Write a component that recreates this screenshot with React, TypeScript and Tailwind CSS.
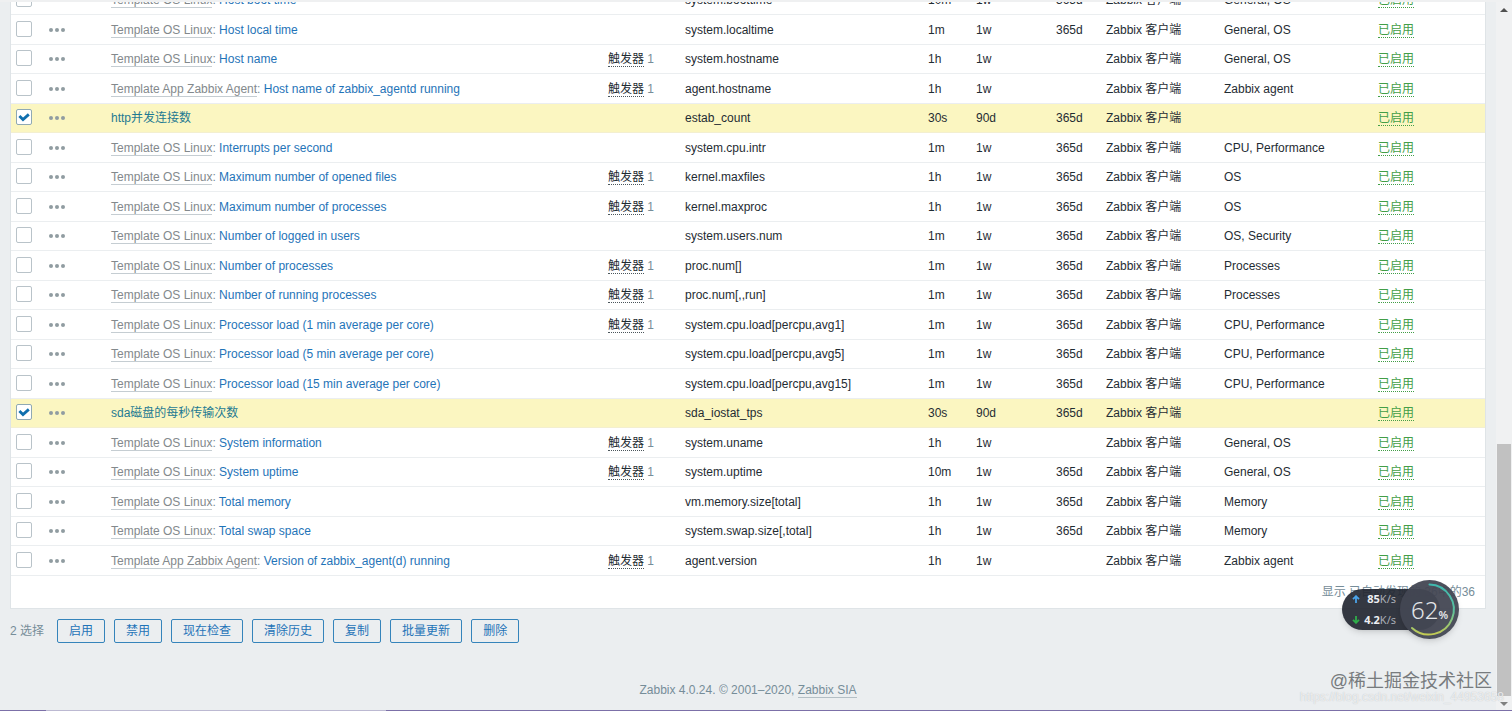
import React, { useState } from 'react';

type Item = {
  template?: string;
  name: string;
  trigger?: boolean;
  itemKey: string;
  interval: string;
  history: string;
  trends?: string;
  apps?: string;
};

const LINUX = 'Template OS Linux';
const AGENT = 'Template App Zabbix Agent';

const items: Item[] = [
  { template: LINUX, name: 'Host boot time', itemKey: 'system.boottime', interval: '10m', history: '1w', trends: '365d', apps: 'General, OS' },
  { template: LINUX, name: 'Host local time', itemKey: 'system.localtime', interval: '1m', history: '1w', trends: '365d', apps: 'General, OS' },
  { template: LINUX, name: 'Host name', trigger: true, itemKey: 'system.hostname', interval: '1h', history: '1w', apps: 'General, OS' },
  { template: AGENT, name: 'Host name of zabbix_agentd running', trigger: true, itemKey: 'agent.hostname', interval: '1h', history: '1w', apps: 'Zabbix agent' },
  { name: 'http并发连接数', itemKey: 'estab_count', interval: '30s', history: '90d', trends: '365d' },
  { template: LINUX, name: 'Interrupts per second', itemKey: 'system.cpu.intr', interval: '1m', history: '1w', trends: '365d', apps: 'CPU, Performance' },
  { template: LINUX, name: 'Maximum number of opened files', trigger: true, itemKey: 'kernel.maxfiles', interval: '1h', history: '1w', trends: '365d', apps: 'OS' },
  { template: LINUX, name: 'Maximum number of processes', trigger: true, itemKey: 'kernel.maxproc', interval: '1h', history: '1w', trends: '365d', apps: 'OS' },
  { template: LINUX, name: 'Number of logged in users', itemKey: 'system.users.num', interval: '1m', history: '1w', trends: '365d', apps: 'OS, Security' },
  { template: LINUX, name: 'Number of processes', trigger: true, itemKey: 'proc.num[]', interval: '1m', history: '1w', trends: '365d', apps: 'Processes' },
  { template: LINUX, name: 'Number of running processes', trigger: true, itemKey: 'proc.num[,,run]', interval: '1m', history: '1w', trends: '365d', apps: 'Processes' },
  { template: LINUX, name: 'Processor load (1 min average per core)', trigger: true, itemKey: 'system.cpu.load[percpu,avg1]', interval: '1m', history: '1w', trends: '365d', apps: 'CPU, Performance' },
  { template: LINUX, name: 'Processor load (5 min average per core)', itemKey: 'system.cpu.load[percpu,avg5]', interval: '1m', history: '1w', trends: '365d', apps: 'CPU, Performance' },
  { template: LINUX, name: 'Processor load (15 min average per core)', itemKey: 'system.cpu.load[percpu,avg15]', interval: '1m', history: '1w', trends: '365d', apps: 'CPU, Performance' },
  { name: 'sda磁盘的每秒传输次数', itemKey: 'sda_iostat_tps', interval: '30s', history: '90d', trends: '365d' },
  { template: LINUX, name: 'System information', trigger: true, itemKey: 'system.uname', interval: '1h', history: '1w', apps: 'General, OS' },
  { template: LINUX, name: 'System uptime', trigger: true, itemKey: 'system.uptime', interval: '10m', history: '1w', trends: '365d', apps: 'General, OS' },
  { template: LINUX, name: 'Total memory', itemKey: 'vm.memory.size[total]', interval: '1h', history: '1w', trends: '365d', apps: 'Memory' },
  { template: LINUX, name: 'Total swap space', itemKey: 'system.swap.size[,total]', interval: '1h', history: '1w', trends: '365d', apps: 'Memory' },
  { template: AGENT, name: 'Version of zabbix_agent(d) running', trigger: true, itemKey: 'agent.version', interval: '1h', history: '1w', apps: 'Zabbix agent' },
];

const actions = ['启用', '禁用', '现在检查', '清除历史', '复制', '批量更新', '删除'];

const ItemRow = ({ item, checked, onToggle }: { item: Item, checked: boolean, onToggle: () => void }) => (
  <tr className={`h-[29px] even:h-[30px] border-b ${checked ? 'bg-[#fbf6c1] border-[#f3efd0]' : 'bg-white border-[#ebeef0]'}`}>
    <td className="pb-0.5 pl-[5px]">
      <span className="relative block size-4">
        <input
          type="checkbox"
          aria-label={item.name}
          checked={checked}
          onChange={onToggle}
          className="block size-4 appearance-none rounded-xs border border-[#b9c3c9] bg-white checked:border-[#8fa9b4] focus:border-[#0275b8] focus:outline-none"
        />
        {checked && (
          <svg viewBox="0 0 16 16" className="pointer-events-none absolute inset-0 size-4" fill="none" stroke="#0f6fae" strokeWidth="2.8">
            <path d="M3.4 7 7 10.6l5.8-5.2" />
          </svg>
        )}
      </span>
    </td>
    <td className="pl-[5px]">
      <button aria-label="菜单" className="block">
        <svg viewBox="0 0 16 4" className="h-1 w-4" fill="#909ca1">
          <circle cx="2" cy="2" r="2" />
          <circle cx="8" cy="2" r="2" />
          <circle cx="14" cy="2" r="2" />
        </svg>
      </button>
    </td>
    <td className="px-[5px] text-[#768d99]">
      {item.template && (
        <>
          <a href="#" className="border-b border-[#c5cdd2] text-[#83898c]">{item.template}</a>
          {': '}
        </>
      )}
      <a href="#" className={checked ? 'text-[#1f7a92]' : 'text-[#1f74b8]'}>{item.name}</a>
    </td>
    <td className="px-[5px] text-[#768d99]">
      {item.trigger && (
        <>
          <a href="#" className="border-b border-dotted border-[#4b565b] text-[#1f2c33]">触发器</a>
          {' '}1
        </>
      )}
    </td>
    <td className="px-[5px]">{item.itemKey}</td>
    <td className="px-[5px]">{item.interval}</td>
    <td className="px-[5px]">{item.history}</td>
    <td className="px-[5px]">{item.trends}</td>
    <td className="px-[5px]">Zabbix 客户端</td>
    <td className="px-[5px]">{item.apps}</td>
    <td className="px-[5px]">
      <a href="#" className="border-b border-dotted border-[#429e47] text-[#429e47]">已启用</a>
    </td>
  </tr>
);

const ScrollBar = () => (
  <div className="flex w-4 shrink-0 flex-col items-center bg-[#f0f1f2] pt-1.5 pb-1">
    <svg viewBox="0 0 8 4" className="h-1 w-2" fill="#505050"><path d="M0 4 4 0l4 4z" /></svg>
    <div className="flex w-full flex-1 flex-col justify-end px-px pb-1.5">
      <div className="h-[252px] bg-[#c1c1c1]" />
    </div>
    <svg viewBox="0 0 8 4" className="h-1 w-2" fill="#808080"><path d="M0 0h8L4 4z" /></svg>
  </div>
);

const NetMonitor = () => (
  <div className="absolute right-[53px] bottom-[72px] flex items-center font-['Noto_Sans',sans-serif]">
    <div className="-mr-10 flex h-[41px] w-[98px] flex-col justify-between rounded-full bg-[#232732]/92 py-1 pl-[10px] text-[11px] leading-3 text-[#a9adb5] shadow-md">
      <div className="flex items-center">
        <svg viewBox="0 0 8 8" className="size-2" fill="none" stroke="#4ba3e8" strokeWidth="1.8"><path d="M4 8V1.200M1 4.200l3-3 3 3" /></svg>
        <span className="flex-1 pr-11 text-right"><b className="text-[#eceef2]">85</b>K/s</span>
      </div>
      <div className="flex items-center">
        <svg viewBox="0 0 8 8" className="size-2" fill="none" stroke="#2fae4a" strokeWidth="1.8"><path d="M4 0v6.800M1 3.800l3 3 3-3" /></svg>
        <span className="flex-1 pr-11 text-right"><b className="text-[#eceef2]">4.2</b>K/s</span>
      </div>
    </div>
    <div className="relative flex size-[59px] items-center justify-center rounded-full bg-[#434753]/95 shadow-md">
      <svg viewBox="0 0 59 59" className="absolute inset-0" fill="none" strokeWidth="2" strokeLinecap="round">
        <defs>
          <linearGradient id="ring" x1="0" y1="0" x2="0" y2="1">
            <stop offset="0" stopColor="#3fb8ae" />
            <stop offset="0.5" stopColor="#58c0a0" />
            <stop offset="1" stopColor="#c3cb54" />
          </linearGradient>
        </defs>
        <path d="M29.500 4.500A25 25 0 1 1 12 48" stroke="url(#ring)" />
      </svg>
      <span className="relative flex items-baseline text-[#e4e6ea]">
        <span className="text-2xl font-light">62</span>
        <span className="text-[11px] font-semibold">%</span>
      </span>
    </div>
  </div>
);

export default function App() {
  const [selected, setSelected] = useState<string[]>(['estab_count', 'sda_iostat_tps']);

  const toggle = (key: string) => {
    setSelected(prev => prev.includes(key) ? prev.filter(k => k !== key) : [...prev, key]);
  };

  return (
    <div className="relative flex h-screen flex-col overflow-hidden bg-[#ebeef0] font-['Liberation_Sans','Noto_Sans_CJK_SC',sans-serif] text-xs text-[#1f2c33]">
      <div className="h-0.5 shrink-0 bg-[#eff0f1]" />
      <div className="flex min-h-0 flex-1">
        {/* content stays scrolled to the end of the list */}
        <div className="flex min-w-0 flex-1 flex-col justify-end overflow-hidden px-[10px]">
          <div className="shrink-0 border border-[#dfe4e7] bg-white">
            <table className="w-full table-fixed border-collapse">
              <colgroup>
                <col className="w-[33px]" />
                <col className="w-[62px]" />
                <col />
                <col className="w-[77px]" />
                <col className="w-[243px]" />
                <col className="w-[48px]" />
                <col className="w-[80px]" />
                <col className="w-[50px]" />
                <col className="w-[118px]" />
                <col className="w-[154px]" />
                <col className="w-[112px]" />
              </colgroup>
              <tbody>
                {items.map(item => (
                  <ItemRow
                    key={item.itemKey}
                    item={item}
                    checked={selected.includes(item.itemKey)}
                    onToggle={() => toggle(item.itemKey)}
                  />
                ))}
              </tbody>
            </table>
            <div className="flex h-8 items-center justify-end px-[10px] text-[#768d99]">显示 已自动发现的 36中的36</div>
          </div>

          <div className="mt-[10px] flex shrink-0 items-center gap-[9px] text-[#768d99]">
            <span className="mr-1">{selected.length} 选择</span>
            {actions.map(label => (
              <button key={label} className="h-6 rounded-xs border border-[#3584bb] px-[11px] text-[#1f74b8]">{label}</button>
            ))}
          </div>

          <footer className="shrink-0 pt-[39px] pb-3 text-center leading-4 text-[#768d99]">
            Zabbix 4.0.24. © 2001–2020, <a href="#" className="border-b border-[#b4bfc5]">Zabbix SIA</a>
          </footer>
        </div>
        <ScrollBar />
      </div>
      <div className="flex h-px shrink-0">
        <div className="w-[46px] bg-[#7c70a8]" />
        <div className="w-[340px] bg-[#bcb9d2]" />
        <div className="flex-1 bg-[#7c70a8]" />
      </div>

      <NetMonitor />
      <div className="pointer-events-none absolute right-5 bottom-[18px] text-lg leading-6 text-[#777b7e]">@稀土掘金技术社区</div>
      <div className="pointer-events-none absolute right-2 bottom-1 text-xs leading-5 text-white/70 [text-shadow:0_0_1px_#b4b8bb]">https://blog.csdn.net/weixin_44953658</div>
    </div>
  );
}
